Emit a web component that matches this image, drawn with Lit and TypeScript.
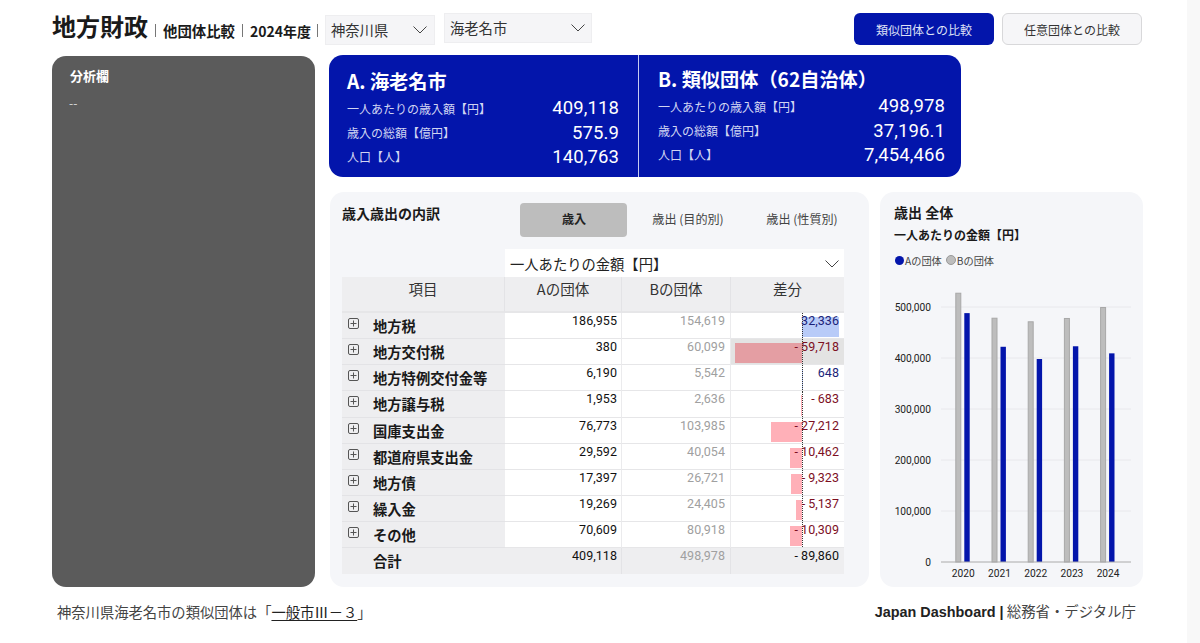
import { LitElement, html, css, svg } from "lit";
import { customElement } from "lit/decorators.js";

const rows = [
  ["地方税", "186,955", "154,619", 32336],
  ["地方交付税", "380", "60,099", -59718],
  ["地方特例交付金等", "6,190", "5,542", 648],
  ["地方譲与税", "1,953", "2,636", -683],
  ["国庫支出金", "76,773", "103,985", -27212],
  ["都道府県支出金", "29,592", "40,054", -10462],
  ["地方債", "17,397", "26,721", -9323],
  ["繰入金", "19,269", "24,405", -5137],
  ["その他", "70,609", "80,918", -10309],
] as [string, string, string, number][];

const years = [
  [2020, 527000, 488000],
  [2021, 478000, 422000],
  [2022, 471000, 398000],
  [2023, 477500, 423000],
  [2024, 499000, 409118],
];

const chevron = html`<svg class="chev" width="14" height="8" viewBox="0 0 14 8"><polyline points="0.5,0.5 7,7 13.5,0.5" fill="none" stroke="#444" stroke-width="1"></polyline></svg>`;
const plus = html`<svg class="plus" width="11" height="11" viewBox="0 0 11 11"><rect x="0.5" y="0.5" width="10" height="10" rx="1.5" fill="none" stroke="#555"></rect><path d="M5.5 2.5v6M2.5 5.5h6" stroke="#555" fill="none"></path></svg>`;

const signed = (v: number) =>
  v < 0
    ? html`<span class="minus">-</span>${Math.abs(v).toLocaleString("en-US")}`
    : v.toLocaleString("en-US");

@customElement("app-root")
export class AppRoot extends LitElement {
  static styles = css`
    :host { display: flex; width: 1200px; height: 643px; overflow: hidden; background: #fff; color: #1a1a1a;
      font-family: "Noto Sans CJK JP", "Noto Sans", sans-serif; }
    * { box-sizing: border-box; }
    .main { width: 1187px; padding: 13px 0 0 52px; }
    .track { width: 13px; background: #f8f8f8; }
    .head { width: 1090px; height: 32px; display: flex; align-items: center; }
    .title { font-size: 24px; font-weight: 700; line-height: 32px; margin-top: -6px; white-space: nowrap; }
    .sep { width: 1px; height: 13px; background: #777; }
    .s1 { margin: 3px 7px 0 7px; }
    .s2 { margin: 3px 7px 0 7px; }
    .s3 { margin: 3px 7px 0 6px; }
    .sub { font-size: 14.4px; font-weight: 700; margin-top: 3px; white-space: nowrap; }
    .sub.yr { font-size: 14px; }
    .sel { display: flex; align-items: center; justify-content: space-between; height: 30px; background: #f5f5f7;
      border: 1px solid #eeeef0; font-size: 14.3px; color: #333; padding: 0 6px 1px 5px; }
    .sel.a { width: 110px; margin: 2px 9px 0 0; padding-right: 7px; }
    .sel.b { width: 148px; margin-top: -2px; }
    .btns { margin-left: auto; display: flex; gap: 8px; }
    .btn { width: 140px; height: 32px; border-radius: 6px; display: flex; align-items: center; justify-content: center;
      font-size: 12px; }
    .btn.on { background: #0315ab; color: #dfe2f6; }
    .btn.off { background: #f6f6f8; border: 1px solid #d8d8da; color: #333; }
    .body { display: grid; grid-template-columns: 263px 1fr; column-gap: 14px; margin-top: 10px; }
    .left { background: #5b5b5b; border-radius: 14px; height: 531px; margin-top: 1px; padding: 10px 18px; color: #fff; }
    .left h3 { margin: 0; font-size: 13px; line-height: 20px; font-weight: 700; }
    .left p { margin: 7px 0 0 -1px; font-size: 12px; line-height: 20px; color: #ddd; }
    .cards { width: 632px; height: 122px; background: #0315ab; border-radius: 14px; display: grid;
      grid-template-columns: 309px 1fr; color: #fff; }
    .card { padding: 12px 19px 0 18px; }
    .card.b { border-left: 1px solid #c6cbf0; padding: 10px 16px 0 19px; }
    .card h2 { margin: 0 0 1px; font-size: 19.2px; line-height: 28px; font-weight: 700; white-space: nowrap; }
    .kv { display: flex; justify-content: space-between; align-items: center; height: 24.4px; }
    .kv span { font-size: 12px; color: #d0d4f2; }
    .kv b { font-family: Roboto, sans-serif; font-weight: 400; font-size: 18.5px; letter-spacing: 0.1px; }
    .panels { display: grid; grid-template-columns: 539px 263px; column-gap: 11px; margin: 15px 0 0 1px; }
    .panel { background: #f5f6f9; border-radius: 14px; height: 395px; }
    .tp { padding: 11px 0 0 12px; }
    .top { display: flex; height: 34px; margin-bottom: 12px; }
    .top h3 { width: 178px; margin: -1px 0 0; font-size: 14px; line-height: 22px; font-weight: 700; white-space: nowrap; }
    .tabs { display: flex; gap: 7px; }
    .tab { width: 107px; height: 34px; display: flex; align-items: center; justify-content: center; font-size: 12.1px;
      color: #444; border-radius: 4px; padding-bottom: 3px; padding-left: 1px; }
    .tab.on { background: #bdbdbd; color: #222; font-weight: 700; }
    .metric { margin-left: 163px; width: 339px; height: 28px; background: #fff; display: flex; align-items: center;
      justify-content: space-between; padding: 1px 5px 0 5px; font-size: 14.3px; color: #222; }
    .grid { display: grid; width: 502px; grid-template-columns: 163px 117px 109px 113px; }
    .h { height: 36px; background: #eeeef0; border-right: 1px solid #e3e3e6; border-bottom: 2px solid #e6e6e8; text-align: center;
      font-size: 14.5px; line-height: 24px; color: #333; }
    .h.last { border-right: 0; }
    .n { height: 26.15px; background: #eeeef0; border-bottom: 1px solid #e3e3e6; display: flex; align-items: flex-start;
      font-size: 14.3px; font-weight: 700; line-height: 25px; color: #1a1a1a; }
    .plus { margin: 5px 14px 0 6px; flex: none; }
    .name { white-space: nowrap; }
    .n.tot { padding-left: 31px; border-bottom: 0; }
    .c { position: relative; height: 26.15px; background: #fff; border-right: 1px solid #ebebed; border-bottom: 1px solid #e6e6e8;
      font-family: Roboto, sans-serif; font-size: 12.5px; letter-spacing: 0.05px; text-align: right; padding: 0 4px 0 0; line-height: 15px; color: #111; }
    .c.bv { color: #a0a0a0; padding-right: 5px; }
    .c.d { border-right: 0; padding-right: 5px; }
    .c.tot { background: #eeeef0; border-bottom: 0; border-right-color: #e3e3e6; }
    .hl { background: #e3e3e3; }
    .pos { color: #1b1f78; }
    .neg { color: #7d0f1f; }
    .val { position: relative; }
    .minus { margin-right: 3px; }
    .bar { position: absolute; top: 4px; bottom: 1px; }
    .bar.p { background: #b8cbf8; }
    .bar.m { background: #ffb0b8; }
    .hl .bar.m { background: #e49ea3; }
    .axis { position: absolute; left: 71px; top: 0; bottom: 0; border-left: 1px dotted #333; }
    .cp { padding: 10px 14px 0 14px; position: relative; }
    .cp h3 { margin: 0; font-size: 14px; line-height: 20px; font-weight: 700; }
    .cp h4 { margin: 3px 0 0; font-size: 12px; line-height: 20px; font-weight: 700; }
    .leg { display: flex; align-items: center; margin-top: 5px; height: 20px; font-size: 10.2px; color: #444; }
    .dot { width: 9px; height: 9px; border-radius: 50%; margin-right: 1px; margin-left: 1px; flex: none; }
    .dot.a { background: #0315ab; }
    .dot.b { width: 10px; height: 10px; background: #bdbdbd; border: 1px solid #999; margin-left: 4px; }
    .chart { display: block; margin: 10px 0 0 -14px; }
    .chart text { font-family: Roboto, sans-serif; font-size: 10.2px; fill: #222; }
    .foot { width: 1079px; margin: 14px 0 0 5px; display: flex; justify-content: space-between; align-items: center;
      font-size: 14.3px; line-height: 20px; color: #444; }
    .foot .r { font-size: 14.4px; white-space: nowrap; }
    .foot u { text-underline-offset: 2px; color: #222; }
    .foot b { font-family: "Liberation Sans", sans-serif; color: #222; }
  `;

  private diff(v: number, hl: boolean) {
    const w = Math.abs(v) * 0.00113;
    const left = v < 0 ? 71 - w : 71;
    return html`<div class="c d ${hl ? "hl" : ""}">
      <div class="bar ${v < 0 ? "m" : "p"}" style="left:${left}px;width:${w}px"></div>
      <div class="axis"></div>
      <div class="val ${v < 0 ? "neg" : "pos"}">${signed(v)}</div>
    </div>`;
  }

  private chart() {
    const Y = (v: number) => 562 - v * 0.00051;
    const ticks = [500000, 400000, 300000, 200000, 100000];
    return html`<svg class="chart" width="263" height="302" viewBox="880 280 263 302">
      ${ticks.map((t) => svg`<line x1="941" x2="1131" y1=${Y(t)} y2=${Y(t)} stroke="#e8e8ec"></line>
        <text x="931" y=${Y(t) + 4} text-anchor="end">${t.toLocaleString("en-US")}</text>`)}
      <text x="931" y="566" text-anchor="end">0</text>
      ${years.map(([yr, b, a], i) => {
        const x = 955.3 + i * 36.2;
        return svg`<rect x=${x + 0.5} y=${Y(b)} width="5" height=${562 - Y(b)} fill="#bdbdbd" stroke="#a8a8a8"></rect>
          <rect x=${x + 9} y=${Y(a)} width="5.4" height=${562 - Y(a)} fill="#0315ab"></rect>
          <text x=${x + 8} y="577" text-anchor="middle">${yr}</text>`;
      })}
      <line x1="941" x2="1131" y1="562" y2="562" stroke="#aaa"></line>
    </svg>`;
  }

  render() {
    return html`<div class="main">
        <div class="head">
          <div class="title">地方財政</div><div class="sep s1"></div>
          <div class="sub">他団体比較</div><div class="sep s2"></div>
          <div class="sub yr">2024年度</div><div class="sep s3"></div>
          <div class="sel a"><span>神奈川県</span>${chevron}</div>
          <div class="sel b"><span>海老名市</span>${chevron}</div>
          <div class="btns"><div class="btn on">類似団体との比較</div><div class="btn off">任意団体との比較</div></div>
        </div>
        <div class="body">
          <div class="left"><h3>分析欄</h3><p>--</p></div>
          <div>
            <div class="cards">
              <div class="card">
                <h2>A. 海老名市</h2>
                <div class="kv"><span>一人あたりの歳入額【円】</span><b>409,118</b></div>
                <div class="kv"><span>歳入の総額【億円】</span><b>575.9</b></div>
                <div class="kv"><span>人口【人】</span><b>140,763</b></div>
              </div>
              <div class="card b">
                <h2>B. 類似団体（62自治体）</h2>
                <div class="kv"><span>一人あたりの歳入額【円】</span><b>498,978</b></div>
                <div class="kv"><span>歳入の総額【億円】</span><b>37,196.1</b></div>
                <div class="kv"><span>人口【人】</span><b>7,454,466</b></div>
              </div>
            </div>
            <div class="panels">
              <div class="panel tp">
                <div class="top">
                  <h3>歳入歳出の内訳</h3>
                  <div class="tabs">
                    <div class="tab on">歳入</div><div class="tab">歳出 (目的別)</div><div class="tab">歳出 (性質別)</div>
                  </div>
                </div>
                <div class="metric"><span>一人あたりの金額【円】</span>${chevron}</div>
                <div class="grid">
                  <div class="h">項目</div><div class="h">Aの団体</div><div class="h">Bの団体</div><div class="h last">差分</div>
                  ${rows.map(([n, a, b, d], i) => html`
                    <div class="n">${plus}<span class="name">${n}</span></div>
                    <div class="c">${a}</div>
                    <div class="c bv">${b}</div>
                    ${this.diff(d, i === 1)}`)}
                  <div class="n tot"><span class="name">合計</span></div>
                  <div class="c tot">409,118</div>
                  <div class="c bv tot">498,978</div>
                  <div class="c d tot">${signed(-89860)}</div>
                </div>
              </div>
              <div class="panel cp">
                <h3>歳出 全体</h3>
                <h4>一人あたりの金額【円】</h4>
                <div class="leg"><span class="dot a"></span>Aの団体<span class="dot b"></span>Bの団体</div>
                ${this.chart()}
              </div>
            </div>
          </div>
        </div>
        <div class="foot">
          <div>神奈川県海老名市の類似団体は「<u>一般市Ⅲ－３</u>」</div>
          <div class="r"><b>Japan Dashboard |</b> 総務省・デジタル庁</div>
        </div>
      </div>
      <div class="track"></div>`;
  }
}
